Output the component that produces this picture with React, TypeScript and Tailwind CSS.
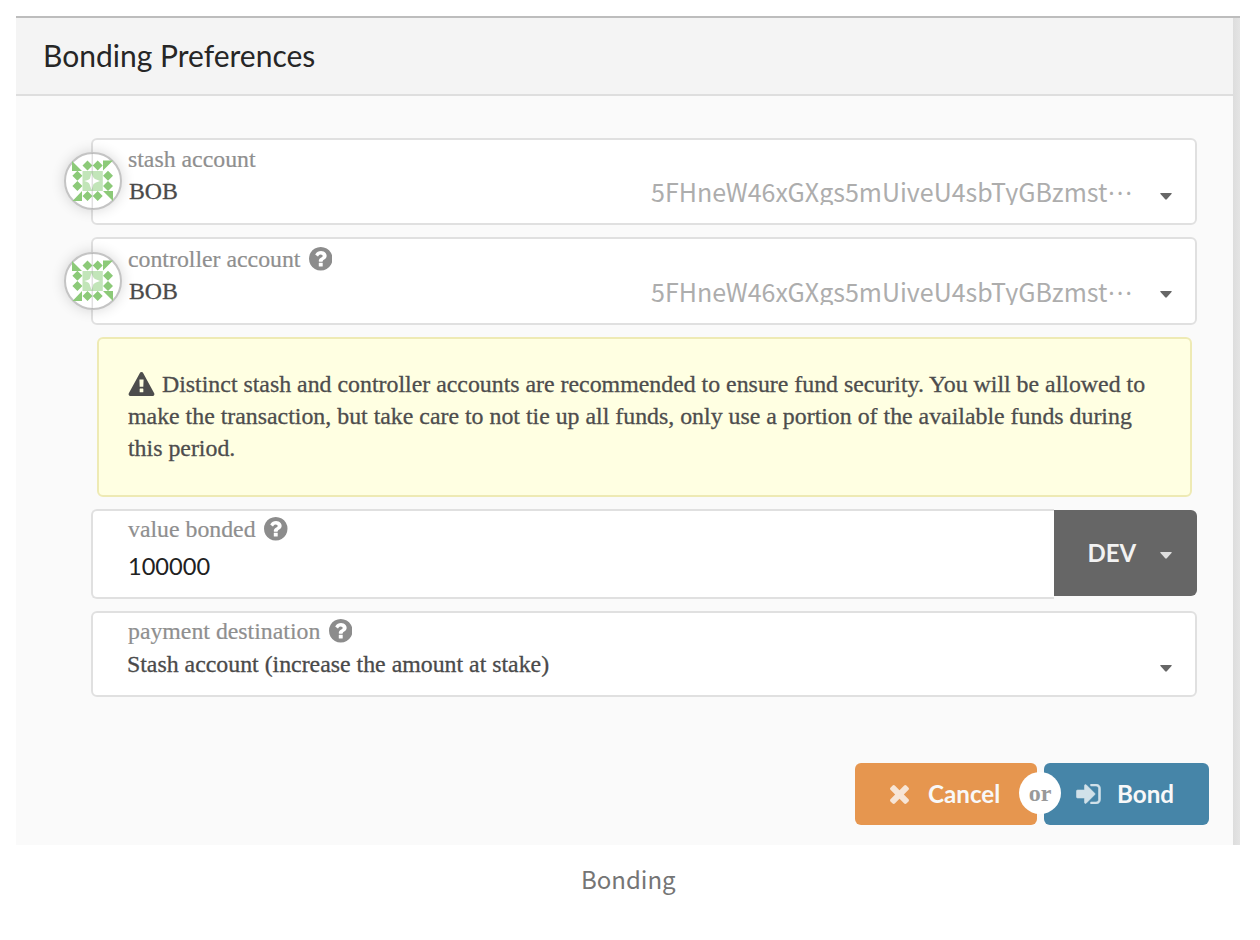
import type { ReactNode } from "react";

const QUESTION =
  "M1024 1376v-192q0-14-9-23t-23-9h-192q-14 0-23 9t-9 23v192q0 14 9 23t23 9h192q14 0 23-9t9-23zm256-672q0-88-55.5-163t-138.500-116-170-41q-243 0-371 213-15 24 8 42l132 100q7 6 19 6 16 0 25-12 53-68 86-92 34-24 86-24 48 0 85.500 26t37.500 59q0 38-20 61t-68 45q-63 28-115.500 86.500t-52.500 125.500v36q0 14 9 23t23 9h192q14 0 23-9t9-23q0-19 21.500-49.500t54.500-49.500q32-18 49-28.500t46-35 44.500-48 28-60.500 12.500-81zm384 192q0 209-103 385.500t-279.500 279.500-385.500 103-385.500-103-279.500-279.500-103-385.500 103-385.500 279.500-279.500 385.500-103 385.500 103 279.500 279.500 103 385.500z";
const WARNING =
  "M1024 1375v-190q0-14-9.500-23.500t-22.500-9.500h-192q-13 0-22.500 9.500t-9.500 23.500v190q0 14 9.500 23.500t22.500 9.500h192q13 0 22.500-9.500t9.500-23.500zm-2-374l18-459q0-12-10-19-13-11-24-11h-220q-11 0-24 11-10 7-10 21l17 457q0 10 10 16.500t24 6.500h185q14 0 23.500-6.500t10.500-16.500zm-14-934l768 1408q35 63-2 126-17 29-46.500 46t-63.500 17h-1536q-34 0-63.500-17t-46.500-46q-37-63-2-126l768-1408q17-31 47-49t65-18 65 18 47 49z";
const TIMES =
  "M1490 1322q0 40-28 68l-136 136q-28 28-68 28t-68-28l-294-294-294 294q-28 28-68 28t-68-28l-136-136q-28-28-28-68t28-68l294-294-294-294q-28-28-28-68t28-68l136-136q28-28 68-28t68 28l294 294 294-294q28-28 68-28t68 28l136 136q28 28 28 68t-28 68l-294 294 294 294q28 28 28 68z";
const SIGN_IN =
  "M1312 896q0 26-19 45l-544 544q-19 19-45 19t-45-19-19-45v-288h-448q-26 0-45-19t-19-45v-384q0-26 19-45t45-19h448v-288q0-26 19-45t45-19 45 19l544 544q19 19 19 45zm352-352v704q0 119-84.500 203.500t-203.500 84.500h-320q-13 0-22.500-9.500t-9.500-22.500q0-4-1-20t-.5-26.500 3-23.500 10-19.500 20.500-6.500h320q66 0 113-47t47-113v-704q0-66-47-113t-113-47h-312l-11.500-1-11.500-3-8-5.500-7-9-2-13.500q0-4-1-20t-.5-26.500 3-23.500 10-19.500 20.500-6.500h320q119 0 203.500 84.500t84.500 203.500z";

function Help() {
  return (
    <svg viewBox="128 128 1536 1536" className="ml-[8.500px] mt-[2px] size-[23.500px] shrink-0" fill="#8c8c8c">
      <path d={QUESTION} />
    </svg>
  );
}

function Caret({ light = false }: { light?: boolean }) {
  return (
    <svg viewBox="0 0 12 7" className="h-[7px] w-3 shrink-0">
      <path d="M.8 0H11.200Q12.200.2 11.500 1.100L6.800 6.300Q6 7 5.200 6.300L.5 1.100Q-.2.2.8 0Z" fill={light ? "#dedede" : "#666"} />
    </svg>
  );
}

function Avatar({ className }: { className: string }) {
  return (
    <div className={`absolute left-[-29px] size-[58px] rounded-full border-2 border-[#c4c4c4] bg-white shadow-[0_0_14px_rgba(0,0,0,0.16)] ${className}`}>
      <svg viewBox="64 152 58 58" className="absolute -left-0.5 -top-0.5 size-[58px]">
        <path
          fill="#8cca78"
          d="M72 161v10h10zM103 160.500h10l-10 10zM82 191v10h-9.500zM103 191h10v10zM87.500 160.500l5 5-5 5-5-5zM97.700 160.500l5 5-5 5-5-5zM87.500 191l5 5-5 5-5-5zM97.700 191l5 5-5 5-5-5zM77.400 170.700l5 5-5 5-5-5zM77.400 180.900l5 5-5 5-5-5zM108 170.700l5 5-5 5-5-5zM108 180.900l5 5-5 5-5-5z"
        />
        <path fill="#c2e5b9" d="M82.500 171h20.300v20H82.500z" />
        <path fill="#fff" d="M91.500 173q1.500 5 3.500 6l5 2q-5 1.500-6.500 3l-2 6-2-6q-1-2-5.500-3 5-1 6-2.500z" />
        <path stroke="#999" strokeOpacity=".3" strokeWidth="1.500" d="M92.300 153v56" />
      </svg>
    </div>
  );
}

function Label({ children, help = false }: { children: ReactNode; help?: boolean }) {
  return (
    <div className="flex h-8 items-start text-[23.800px] leading-[29px] text-[#8f8f8f] [-webkit-text-stroke:0.2px]">
      <span>{children}</span>
      {help && <Help />}
    </div>
  );
}

function Account({ label, help, className, caretClass }: { label: string; help?: boolean; className: string; caretClass: string }) {
  return (
    <div className={`relative rounded-md border-2 border-[#e0e0e0] bg-white pl-[35px] pr-[23px] ${className}`}>
      <Avatar className={help ? "top-[13px]" : "top-3"} />
      <Label help={help}>{label}</Label>
      <div className="flex h-8 items-start">
        <span className="pl-px text-[23.800px] leading-[29px] text-[#4a4a4a] [-webkit-text-stroke:0.3px]">BOB</span>
        <span className="ml-auto mt-[3px] h-[25px] w-[485px] overflow-hidden whitespace-nowrap font-['Noto_Sans_CJK_JP',sans-serif] text-[25px] leading-[23px] text-[#adadad]">
          <span>5FHneW46xGXgs5mUiveU4sbTyGBzmst</span>
          <span className="relative -top-[7px] text-[23px]">…</span>
        </span>
        <span className={`ml-6 flex ${caretClass}`}>
          <Caret />
        </span>
      </div>
    </div>
  );
}

export default function App() {
  return (
    <div className="h-[940px] w-[1260px] overflow-hidden bg-white pl-4 pt-4 font-['Liberation_Serif',serif]">
      <div className="w-[1224px] border-t-2 border-[#bdbdbd]">
        <div className="flex h-[827px]">
          <div className="w-[1217px] bg-[#fafafa]">
            <header className="flex h-[78px] items-center border-b-2 border-[#dedede] bg-[#f4f4f4] pb-0.5 pl-[27px] font-['Lato',sans-serif] text-[30px] text-[#262626]">
              Bonding Preferences
            </header>
            <main className="pl-[75px] pr-9 pt-[42px]">
              <Account label="stash account" className="h-[87px] pt-[5px]" caretClass="pt-4" />
              <Account label="controller account" help className="mt-3 h-[88px] pt-[6px]" caretClass="pt-[14px]" />
              <div className="ml-1.5 mr-[5px] mt-3 h-40 rounded-md border-2 border-[#eeeab4] bg-[#ffffe2] pl-[29px] pt-[29px] text-[23.850px] leading-8 text-[#4d4d4d] [-webkit-text-stroke:0.3px]">
                <div className="flex items-center whitespace-nowrap">
                  <svg viewBox="0 0 1792 1664" className="mr-[7px] h-6 w-[27px]" fill="#4d4d4d">
                    <path d={WARNING} />
                  </svg>
                  <span>Distinct stash and controller accounts are recommended to ensure fund security. You will be allowed to</span>
                </div>
                <div className="whitespace-nowrap">make the transaction, but take care to not tie up all funds, only use a portion of the available funds during</div>
                <div>this period.</div>
              </div>
              <div className="mt-3 flex h-[90px]">
                <div className="w-[963px] rounded-l-md border-y-2 border-l-2 border-[#e0e0e0] bg-white pl-[35px] pt-[4px]">
                  <Label help>value bonded</Label>
                  <div className="mt-[3px] font-['Lato',sans-serif] text-[23.600px] leading-8 text-[#212121]">100000</div>
                </div>
                <div className="mt-px flex h-[86px] w-[143px] items-center rounded-r-md bg-[#666] pl-[33.500px] pr-[25px] font-['Lato',sans-serif] text-[24px] font-bold text-[#f2f2f2]">
                  <span>DEV</span>
                  <span className="ml-auto flex pt-1">
                    <Caret light />
                  </span>
                </div>
              </div>
              <div className="mt-3 h-[86px] rounded-md border-2 border-[#e0e0e0] bg-white pl-[34px] pr-[23px] pt-[4px]">
                <div className="pl-px">
                  <Label help>payment destination</Label>
                </div>
                <div className="flex h-8 items-center justify-between text-[23.840px] text-[#4a4a4a] [-webkit-text-stroke:0.3px]">
                  <span>Stash account (increase the amount at stake)</span>
                  <span className="flex pt-1.5">
                    <Caret />
                  </span>
                </div>
              </div>
            </main>
            <div className="relative ml-[839px] mt-[66px] flex h-[62px] gap-[7px] font-['Lato',sans-serif] text-[24.200px] font-bold text-[#f8f8f8]">
              <button className="flex w-[182px] items-center rounded-md bg-[#e6964f] pl-[35px]">
                <svg viewBox="302 302 1188 1252" className="mr-[19px] h-5 w-[19px]" fill="#f7e5d6">
                  <path d={TIMES} />
                </svg>
                Cancel
              </button>
              <button className="flex w-[165px] items-center rounded-md bg-[#4685a8] pl-8">
                <svg viewBox="108 256 1576 1280" className="mr-4 h-5 w-[25px]" fill="#d1e1e9" stroke="#d1e1e9" strokeWidth="36">
                  <path d={SIGN_IN} />
                </svg>
                Bond
              </button>
              <span className="absolute left-[164px] top-[9px] flex size-[42px] items-center justify-center rounded-full bg-white font-['Liberation_Serif',serif] text-[24px] font-bold text-[#999]">
                or
              </span>
            </div>
          </div>
          <div className="w-[7px] bg-linear-to-r from-[#dddddd] to-[#e4e4e4]" />
        </div>
      </div>
      <p className="mt-[16px] w-[1224px] pl-[565px] font-['Noto_Sans_CJK_JP',sans-serif] text-[24px] leading-9 text-[#757575]">Bonding</p>
    </div>
  );
}
